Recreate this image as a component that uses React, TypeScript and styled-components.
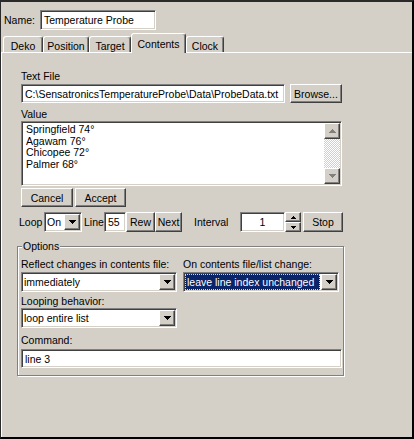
import React from "react";
import styled, { createGlobalStyle, css } from "styled-components";

const FACE = "#d4d0c8";
const SHADOW = "#808080";
const DARK = "#404040";

const Global = createGlobalStyle`
  html, body { margin: 0; padding: 0; background: ${FACE}; }
  body { font-family: "Liberation Sans", Arial, sans-serif; font-size: 10.5px; color: #000; }
  *, *::before, *::after { box-sizing: border-box; }
`;

const sunken = css`
  border: 1px solid;
  border-color: ${SHADOW} #fff #fff ${SHADOW};
  box-shadow: inset 1px 1px 0 ${DARK}, inset -1px -1px 0 ${FACE};
  background: #fff;
`;

const raised = css`
  border: 1px solid;
  border-color: #fff ${DARK} ${DARK} #fff;
  box-shadow: inset -1px -1px 0 ${SHADOW};
  background: ${FACE};
`;

const Window = styled.div`
  width: 414px;
  height: 439px;
  background: ${FACE};
  border-style: solid;
  border-color: #2a2a2a #000 #000 #2a2a2a;
  border-width: 2px 2px 2px 1px;
  display: flex;
  flex-direction: column;
  overflow: hidden;
`;

const NameRow = styled.div`
  display: flex;
  align-items: center;
  gap: 5px;
  padding: 8px 0 0 3px;
`;

const TextBox = styled.div<{ $w?: number; $h: number; $mt?: number; $center?: boolean }>`
  ${sunken}
  width: ${(p) => (p.$w ? `${p.$w}px` : "auto")};
  height: ${(p) => p.$h}px;
  margin-top: ${(p) => p.$mt ?? 0}px;
  padding: 0 3px;
  display: flex;
  align-items: center;
  justify-content: ${(p) => (p.$center ? "center" : "flex-start")};
  white-space: nowrap;
  overflow: hidden;
`;

const TabStrip = styled.div`
  display: flex;
  align-items: flex-end;
  height: 19px;
  margin-top: 3px;
  padding-left: 2px;
`;

const Tab = styled.div<{ $w: number; $active?: boolean }>`
  width: ${(p) => p.$w}px;
  height: ${(p) => (p.$active ? 20 : 16)}px;
  margin-bottom: ${(p) => (p.$active ? -1 : 0)}px;
  position: relative;
  z-index: ${(p) => (p.$active ? 1 : 0)};
  background: ${FACE};
  border: 1px solid;
  border-bottom: none;
  border-color: #fff ${DARK} transparent #fff;
  box-shadow: inset -1px 0 0 ${SHADOW};
  border-radius: 3px 3px 0 0;
  display: flex;
  align-items: center;
  justify-content: center;
  padding-top: ${(p) => (p.$active ? 0 : 2)}px;
  white-space: nowrap;
`;

const Panel = styled.div`
  flex: 1;
  border-top: 1px solid #fff;
  border-left: 1px solid #fff;
  padding: 17px 0 0 19px;
`;

const Column = styled.div`
  width: 321px;
  display: flex;
  flex-direction: column;
`;

const Label = styled.div<{ $mt?: number }>`
  height: 13px;
  line-height: 13px;
  margin-top: ${(p) => p.$mt ?? 0}px;
  white-space: nowrap;
`;

const Row = styled.div<{ $mt: number; $gap: number }>`
  display: flex;
  gap: ${(p) => p.$gap}px;
  margin-top: ${(p) => p.$mt}px;
`;

const Button = styled.button<{ $w: number; $h: number }>`
  ${raised}
  width: ${(p) => p.$w}px;
  height: ${(p) => p.$h}px;
  padding: 0;
  font: inherit;
  color: #000;
  display: flex;
  align-items: center;
  justify-content: center;
`;

const ListBox = styled.div`
  ${sunken}
  height: 65px;
  padding: 1px;
  display: flex;
`;

const ListLines = styled.div`
  flex: 1;
  padding: 1px 0 0 3px;
  line-height: 11.7px;
`;

const ScrollBar = styled.div`
  width: 16px;
  display: flex;
  flex-direction: column;
`;

const ScrollButton = styled.div`
  ${raised}
  height: 16px;
  display: flex;
  align-items: center;
  justify-content: center;
`;

const ScrollTrack = styled.div`
  flex: 1;
  background: repeating-conic-gradient(#fff 0% 25%, ${FACE} 0% 50%) 0 0 / 2px 2px;
`;

const LoopRow = styled.div`
  display: grid;
  grid-template-columns: 25px 38px 22px 22px 29px 27px 58px 45px 16px 2px 40px;
  height: 20px;
  margin: 5px 0 0 -2px;
`;

const RowText = styled.div<{ $pl: number }>`
  display: flex;
  align-items: center;
  padding-left: ${(p) => p.$pl}px;
  white-space: nowrap;
`;

const SpinBox = styled.div`
  display: flex;
  flex-direction: column;
`;

const SpinButton = styled.div`
  ${raised}
  flex: 1;
  display: flex;
  align-items: center;
  justify-content: center;
`;

const Group = styled.fieldset`
  margin: 8px 0 0 -4px;
  width: 327px;
  min-width: 0;
  padding: 5px 1px 7px 3px;
  border: 1px solid ${SHADOW};
  box-shadow: inset 1px 1px 0 #fff, 1px 1px 0 #fff;
`;

const Legend = styled.legend`
  padding: 0 1px;
  margin-left: 1px;
  line-height: 13px;
  background: ${FACE};
`;

const ComboGrid = styled.div`
  display: grid;
  grid-template-columns: 156px 156px;
  column-gap: 6px;
  row-gap: 1px;
`;

const ComboBox = styled.div<{ $w?: number }>`
  ${sunken}
  width: ${(p) => (p.$w ? `${p.$w}px` : "100%")};
  height: 20px;
  padding: 1px;
  display: flex;
`;

const ComboField = styled.div<{ $selected?: boolean }>`
  flex: 1;
  display: flex;
  align-items: center;
  margin-right: 1px;
  padding-left: ${(p) => (p.$selected ? 2 : 1)}px;
  white-space: nowrap;
  overflow: hidden;
  ${(p) =>
    p.$selected &&
    css`
      background: #0a246a;
      color: #fff;
      outline: 1px dotted #f2d98a;
      outline-offset: -1px;
    `}
`;

const DropButton = styled.div`
  ${raised}
  width: 16px;
  display: flex;
  align-items: center;
  justify-content: center;
`;

const Tri = ({ up, color = "#000" }: { up?: boolean; color?: string }) => (
  <svg width="7" height="4" viewBox="0 0 7 4" shapeRendering="crispEdges"
    style={{ transform: up ? "scaleY(-1)" : undefined, display: "block" }}>
    <path d="M0 0h7v1h-1v1h-1v1h-1v1h-1v-1h-1v-1h-1v-1h-1z" fill={color} />
  </svg>
);

const SmallTri = ({ up }: { up?: boolean }) => (
  <svg width="5" height="3" viewBox="0 0 5 3" shapeRendering="crispEdges"
    style={{ transform: up ? "scaleY(-1)" : undefined, display: "block" }}>
    <path d="M0 0h5v1h-1v1h-1v1h-1v-1h-1v-1h-1z" fill="#000" />
  </svg>
);

const Combo = ({ value, w, selected }: { value: string; w?: number; selected?: boolean }) => (
  <ComboBox $w={w}>
    <ComboField $selected={selected}>{value}</ComboField>
    <DropButton>
      <Tri />
    </DropButton>
  </ComboBox>
);

const tabs = [
  { name: "Deko", w: 40 },
  { name: "Position", w: 46 },
  { name: "Target", w: 42 },
  { name: "Contents", w: 55, active: true },
  { name: "Clock", w: 38 },
];

const lines = ["Springfield 74°", "Agawam 76°", "Chicopee 72°", "Palmer 68°"];

export default function App() {
  return (
    <>
      <Global />
      <Window>
        <NameRow>
          <span>Name:</span>
          <TextBox $w={116} $h={20}>Temperature Probe</TextBox>
        </NameRow>
        <TabStrip>
          {tabs.map((t) => (
            <Tab key={t.name} $w={t.w} $active={t.active}>
              {t.name}
            </Tab>
          ))}
        </TabStrip>
        <Panel>
          <Column>
            <Label>Text File</Label>
            <Row $mt={1} $gap={5}>
              <TextBox $w={264} $h={19}>C:\SensatronicsTemperatureProbe\Data\ProbeData.txt</TextBox>
              <Button $w={52} $h={19}>Browse...</Button>
            </Row>
            <Label $mt={5}>Value</Label>
            <ListBox>
              <ListLines>
                {lines.map((l) => (
                  <div key={l}>{l}</div>
                ))}
              </ListLines>
              <ScrollBar>
                <ScrollButton>
                  <Tri up color={SHADOW} />
                </ScrollButton>
                <ScrollTrack />
                <ScrollButton>
                  <Tri color={SHADOW} />
                </ScrollButton>
              </ScrollBar>
            </ListBox>
            <Row $mt={2} $gap={2}>
              <Button $w={52} $h={19}>Cancel</Button>
              <Button $w={51} $h={19}>Accept</Button>
            </Row>
            <LoopRow>
              <RowText $pl={0}>Loop</RowText>
              <Combo value="On" w={38} />
              <RowText $pl={2}>Line</RowText>
              <TextBox $h={20}>55</TextBox>
              <Button $w={29} $h={20}>Rew</Button>
              <Button $w={27} $h={20}>Next</Button>
              <RowText $pl={12}>Interval</RowText>
              <TextBox $h={20} $center>1</TextBox>
              <SpinBox>
                <SpinButton>
                  <SmallTri up />
                </SpinButton>
                <SpinButton>
                  <SmallTri />
                </SpinButton>
              </SpinBox>
              <span />
              <Button $w={40} $h={20}>Stop</Button>
            </LoopRow>
            <Group>
              <Legend>Options</Legend>
              <ComboGrid>
                <Label>Reflect changes in contents file:</Label>
                <Label>On contents file/list change:</Label>
                <Combo value="immediately" />
                <Combo value="leave line index unchanged" selected />
              </ComboGrid>
              <Label $mt={3}>Looping behavior:</Label>
              <Combo value="loop entire list" w={156} />
              <Label $mt={6}>Command:</Label>
              <TextBox $h={19} $mt={2}>line 3</TextBox>
            </Group>
          </Column>
        </Panel>
      </Window>
    </>
  );
}
